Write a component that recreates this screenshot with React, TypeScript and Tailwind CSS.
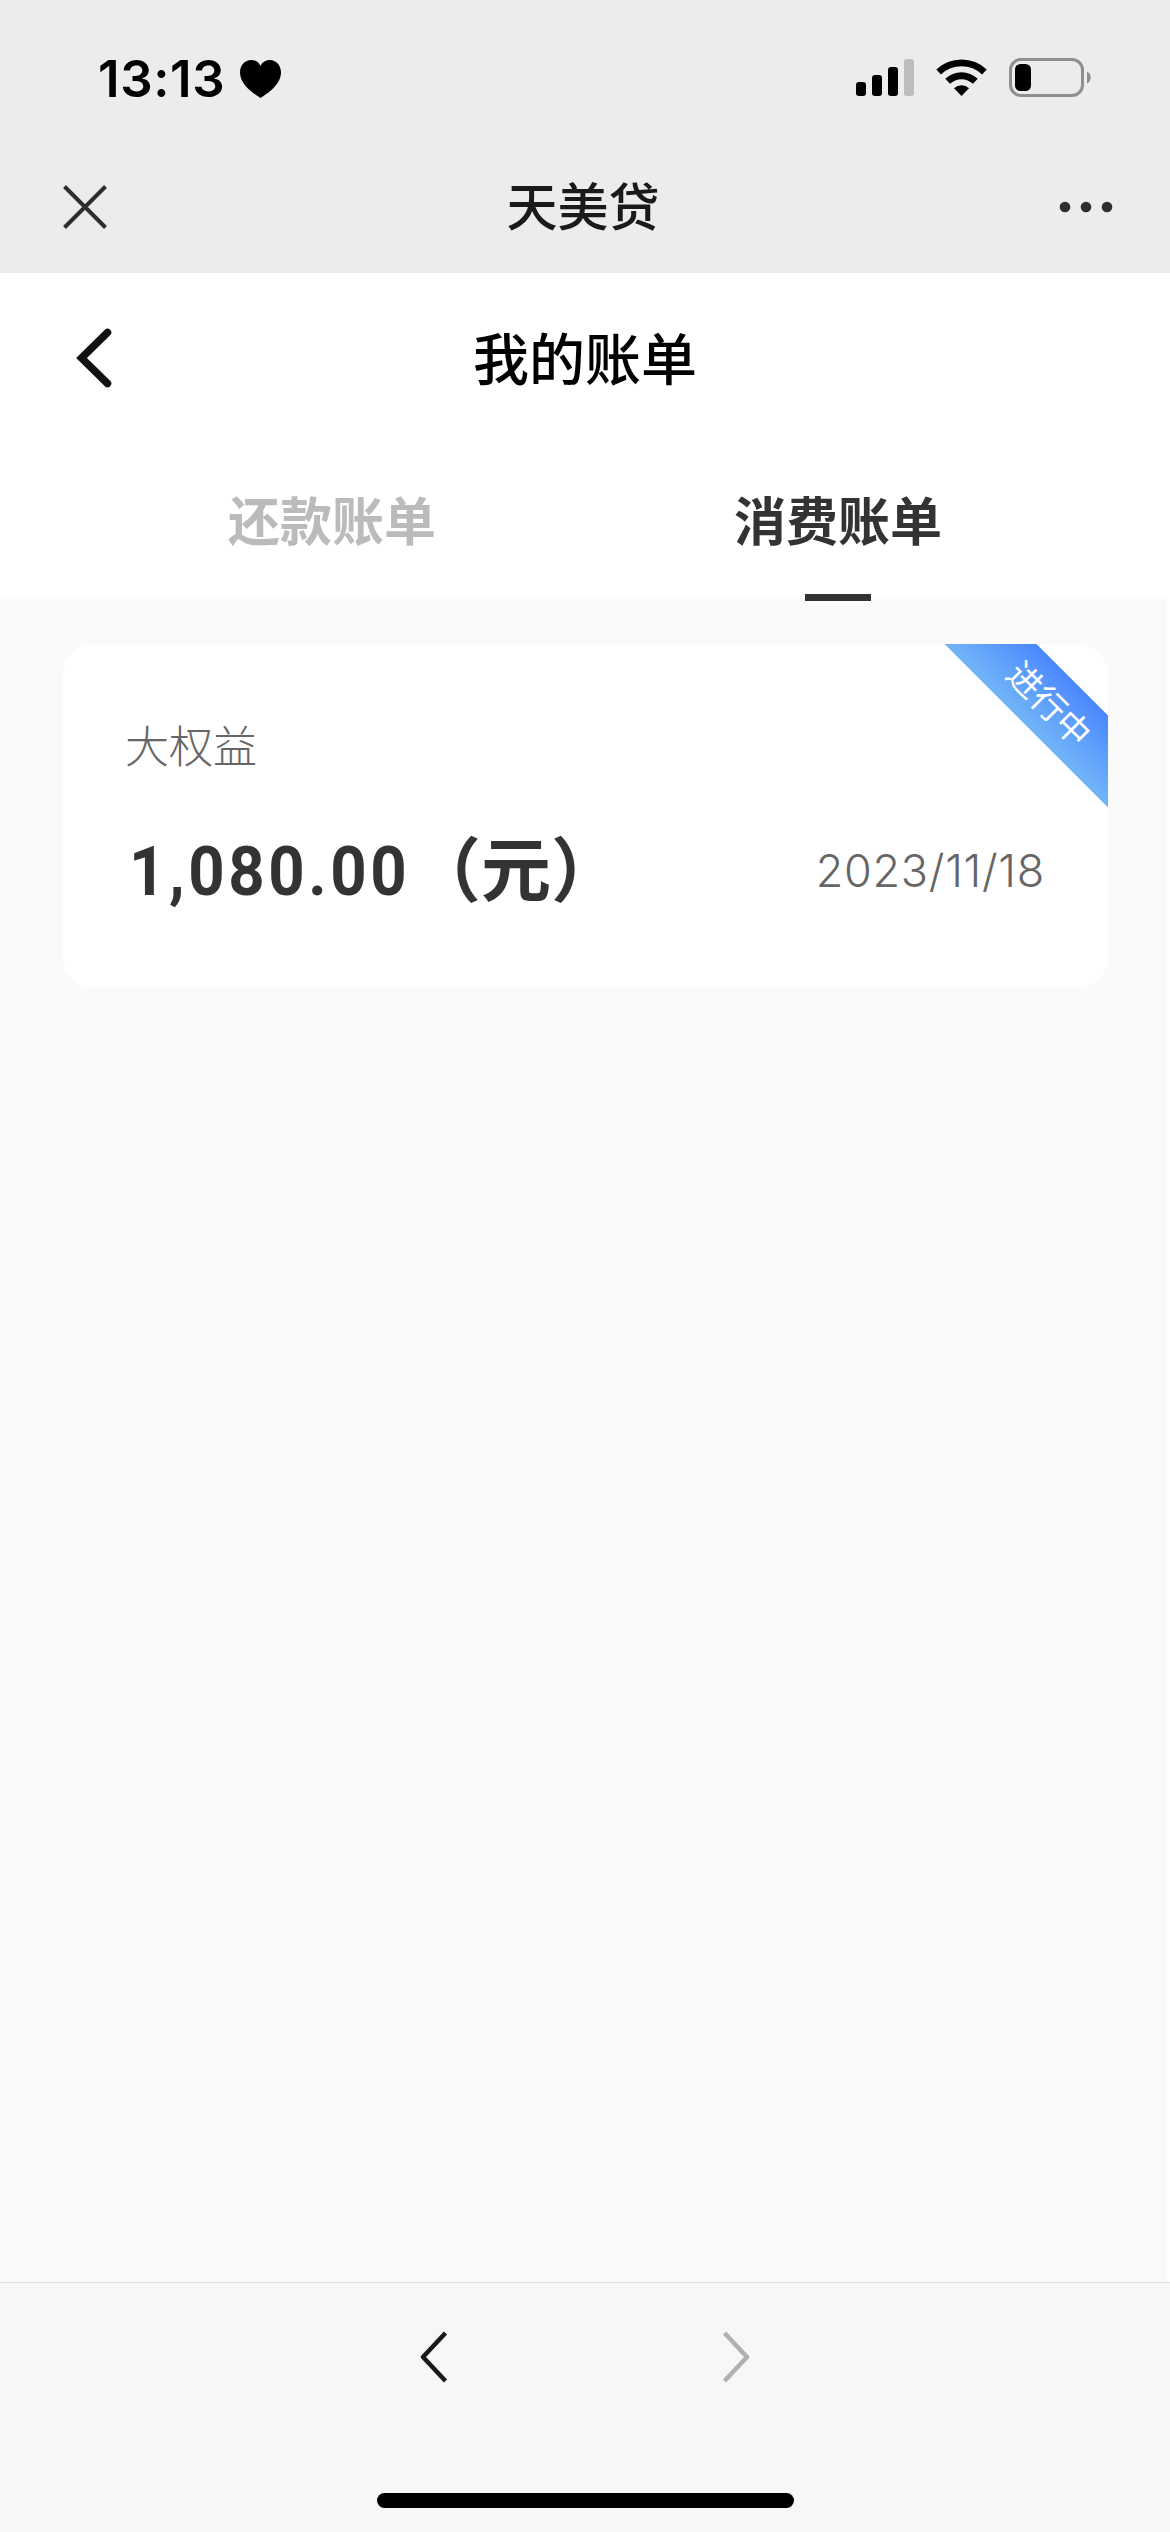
const CJK = "font-['Noto_Sans_CJK_SC',sans-serif]";

function StatusBar() {
  return (
    <div className="flex h-[156px] items-center pr-[78px] pl-[98px]">
      <span className="mt-[2px] w-[142px] font-['Inter',sans-serif] text-[51px] leading-[60px] font-semibold tracking-[0.6px] text-black">13:13</span>
      <svg className="mt-[2px] h-[38px] w-[41px]" viewBox="0 0 41 38">
        <path d="M20.5 38C17 35.5 0 26 0 12.500C0 5 5 0 11.200 0C15.500 0 19 2.500 20.500 6C22 2.500 25.500 0 29.800 0C36 0 41 5 41 12.500C41 26 24 35.500 20.500 38Z" />
      </svg>
      <svg className="ml-auto h-[40px] w-[236px]" viewBox="856 58 236 40">
        <rect x="856" y="82" width="10" height="14" rx="3" />
        <rect x="872" y="75" width="10" height="21" rx="3" />
        <rect x="888" y="67" width="10" height="29" rx="3" />
        <rect x="904" y="59" width="10" height="37" rx="3" fill="#bdbdbd" />
        <path d="M936.300 69.500A36.500 36.500 0 0 1 986.700 69.500L982 74.500A29.500 29.500 0 0 0 941 74.500Z" />
        <path d="M945.300 78.800A23.300 23.300 0 0 1 977.700 78.800L973 83.800A16.500 16.500 0 0 0 950 83.800Z" />
        <path d="M961.500 96L954 88.300A11 11 0 0 1 969 88.300Z" />
        <rect x="1010.500" y="59.500" width="72" height="36" rx="10.500" fill="none" stroke="#8f8f8f" strokeWidth="3" />
        <rect x="1015" y="64" width="16" height="27" rx="5.500" />
        <path d="M1087 71.500C1092 73.500 1092 81.500 1087 83.500Z" fill="#8f8f8f" />
      </svg>
    </div>
  );
}

export default function App() {
  return (
    <div className={`flex h-[2532px] w-[1170px] flex-col overflow-hidden bg-white ${CJK}`}>
      <header className="h-[273px] shrink-0 bg-[#ececec]">
        <StatusBar />
        <div className="flex h-[102px] items-center justify-between pr-[57px] pl-[63px]">
          <svg className="h-11 w-11" viewBox="0 0 44 44" stroke="#2e2e2e" strokeWidth="4">
            <path d="M1.500 1.500L42.500 42.500M42.500 1.500L1.500 42.500" />
          </svg>
          <h1 className="pb-[5px] text-[51px] leading-none font-medium text-[#1a1a1a]">天美贷</h1>
          <svg className="h-3 w-[54px]" viewBox="0 0 54 12" fill="#2e2e2e">
            <circle cx="6" cy="6" r="5.300" />
            <circle cx="27" cy="6" r="5.300" />
            <circle cx="48" cy="6" r="5.300" />
          </svg>
        </div>
      </header>

      <section className="relative z-10 h-[324px] shrink-0 bg-white">
        <div className="grid h-[170px] grid-cols-[1fr_auto_1fr] items-center px-[76px]">
          <svg className="h-[60px] w-9" viewBox="0 0 36 60" fill="none" stroke="#111" strokeWidth="7.500" strokeLinecap="round">
            <path d="M31.500 4.500L5.500 30L31.500 55.500" />
          </svg>
          <h2 className="pb-[5px] text-[56px] leading-none font-medium text-black">我的账单</h2>
        </div>
        <div className="grid h-[154px] grid-cols-2 px-[79px] text-center text-[52px] font-bold">
          <div className="pt-[46px] leading-[60px] text-[#bbb]">还款账单</div>
          <div className="flex flex-col items-center pt-[46px] leading-[60px] text-[#333]">
            <span>消费账单</span>
            <span className="mt-[45px] h-[6.500px] w-[66px] shrink-0 bg-[#333]" />
          </div>
        </div>
      </section>

      <main className="mr-[3px] flex-1 bg-[#fafafa] pt-[47px] pr-[59.500px] pl-[62.500px]">
        <article className="relative h-[344px] overflow-hidden rounded-[30px] bg-white px-[62.500px] pt-[74px]">
          <div className="text-[44px] leading-[52px] font-light text-[#666]">大权益</div>
          <div className="mt-[58px] flex items-center justify-between leading-[76px]">
            <div className="flex text-[70px] font-bold whitespace-nowrap text-[#333]">
              <span className="mt-[6px] w-[286px] origin-left translate-x-1 scale-x-[0.92] font-['Roboto',sans-serif] text-[69px] tracking-[3.900px]">1,080.00</span>
              <span>（元）</span>
            </div>
            <span className="pt-[3px] font-['Inter',sans-serif] text-[45px] font-light tracking-[0.700px] text-[#666]">2023/11/18</span>
          </div>
          <div className="absolute top-[23px] right-[-68px] flex h-[65px] w-[260px] rotate-45 items-center justify-center bg-linear-to-t from-[#73b5f7] to-[#4b87fd] pb-px pl-[11px] text-[34px] leading-none text-white">
            进行中
          </div>
        </article>
      </main>

      <footer className="flex h-[250px] shrink-0 flex-col items-center border-t border-[#dedede] bg-[#f7f7f7] pt-12">
        <div className="flex w-[330px] justify-between">
          <svg className="h-[52px] w-7" viewBox="0 0 28 52" fill="none" stroke="#1a1a1a" strokeWidth="4.500">
            <path d="M25.500 2L3 26L25.500 50" strokeLinejoin="round" />
          </svg>
          <svg className="h-[52px] w-7" viewBox="0 0 28 52" fill="none" stroke="#b0b0b0" strokeWidth="4.500">
            <path d="M2.500 2L25 26L2.500 50" strokeLinejoin="round" />
          </svg>
        </div>
        <div className="mt-[110px] h-[15px] w-[417px] rounded-full bg-black" />
      </footer>
    </div>
  );
}
